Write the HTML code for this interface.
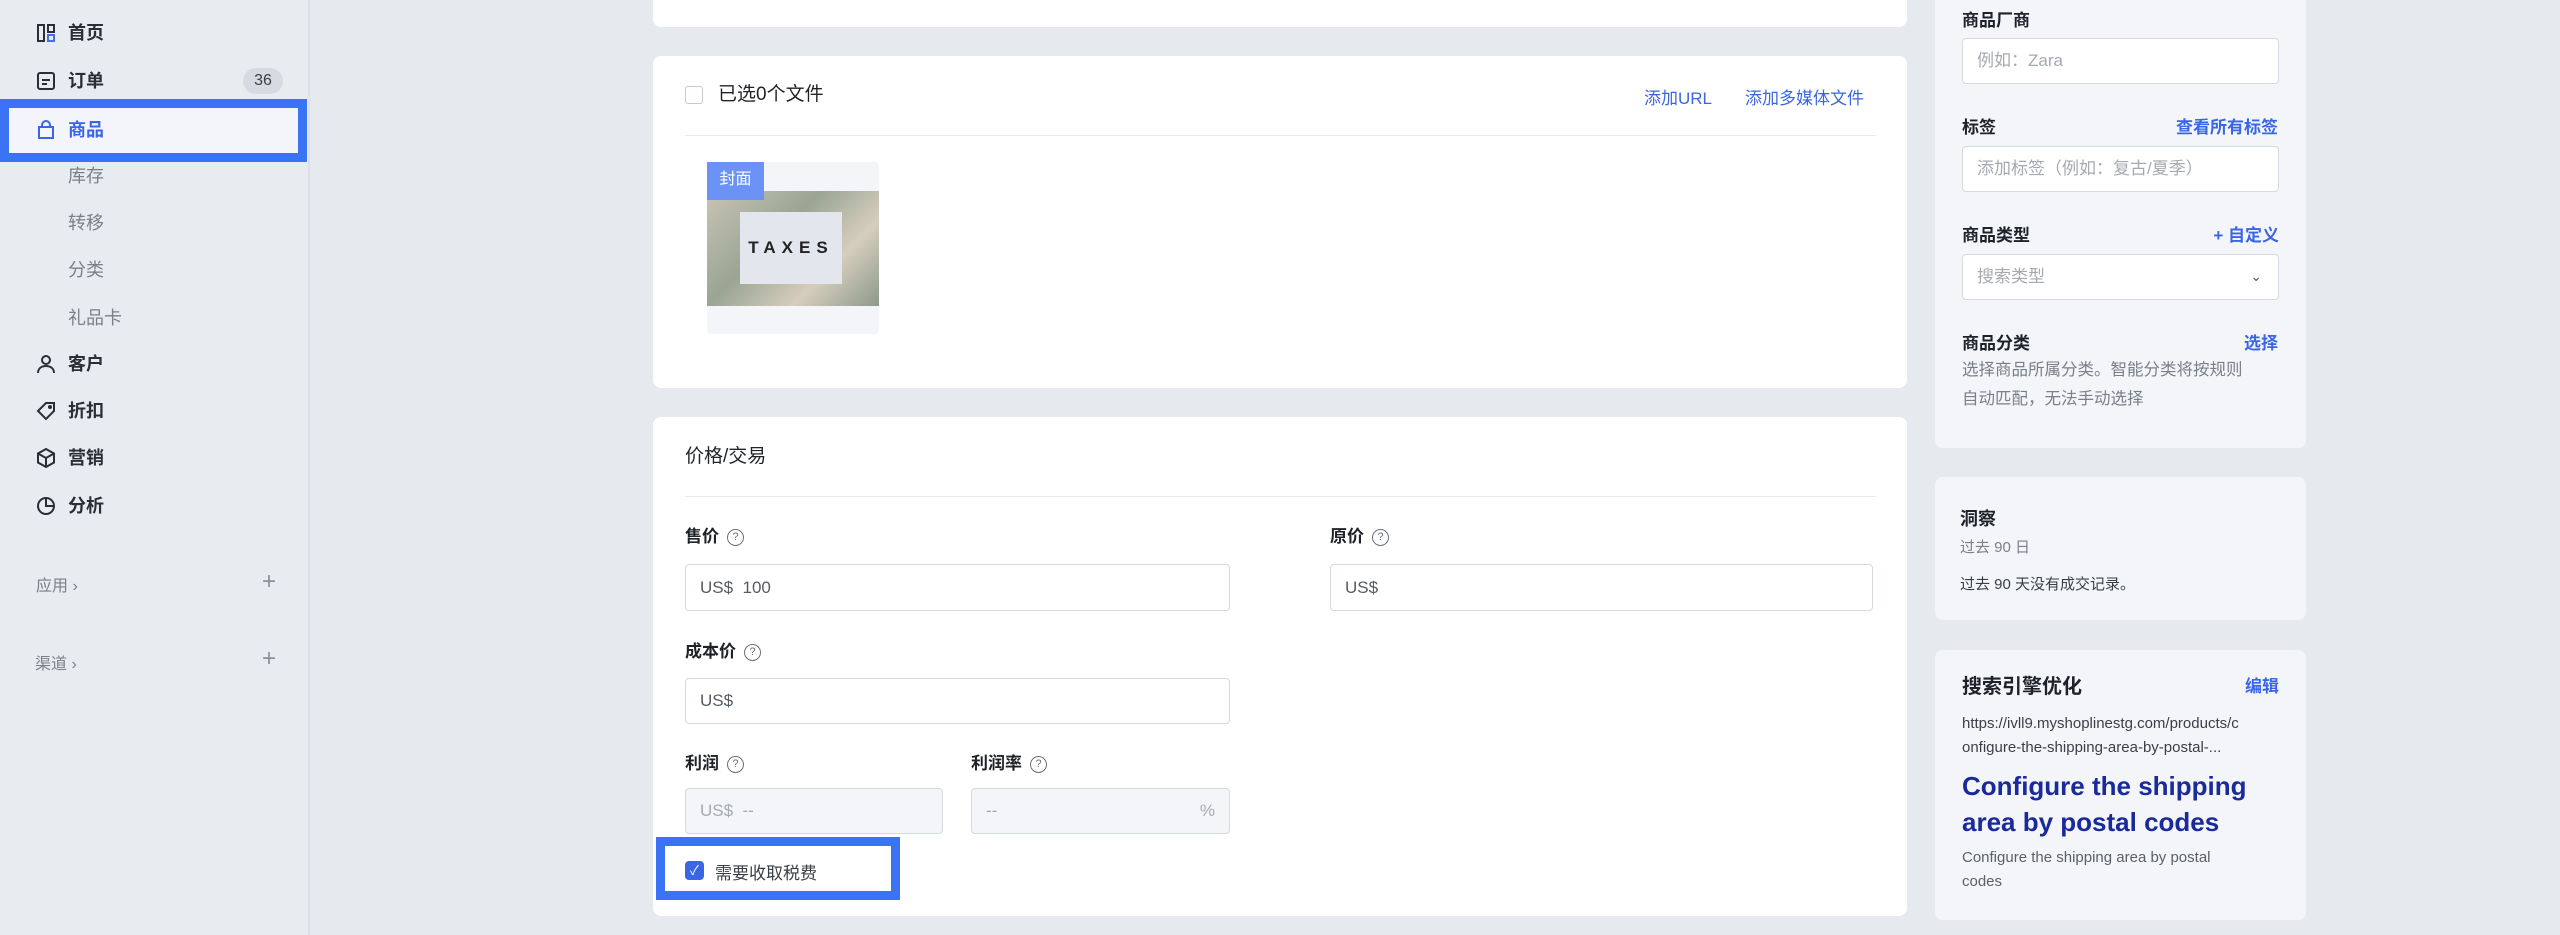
<!DOCTYPE html>
<html><head><meta charset="utf-8"><style>
*{box-sizing:border-box;margin:0;padding:0}
body{width:2560px;height:935px;overflow:hidden;background:#e6e9ee;font-family:"Liberation Sans","Noto Sans CJK SC",sans-serif;color:#1f2329;position:relative}
.a{position:absolute}
.side{left:0;top:0;width:310px;height:935px;background:#e8ebf0;border-right:2px solid #dde0e6}
.nav{left:68px;font-size:18px;font-weight:bold;color:#2a2f36;line-height:24px}
.sub{left:68px;font-size:18px;color:#7a8089;line-height:24px}
.ic{left:36px;width:20px;height:20px}
.card{background:#fff;border-radius:8px}
.lbl{font-size:17px;font-weight:bold;color:#1f2329;line-height:22px}
.inp{border:1.5px solid #d5d9e0;border-radius:4px;background:#fff;font-size:17px;color:#555b63;padding-left:14px;display:flex;align-items:center}
.q{display:inline-block;width:17px;height:17px;border:1.5px solid #6b7078;border-radius:50%;font-size:11px;line-height:14px;text-align:center;vertical-align:2px;margin-left:8px;font-weight:normal;color:#6b7078}
.rc{background:#f3f5f9;border-radius:8px;left:1935px;width:371px}
.rl{font-size:17px;font-weight:bold;color:#1f2329}
.link{color:#3a66e6;font-weight:bold}
.ri{left:1962px;width:317px;height:46px;border:1.5px solid #d5d9e0;border-radius:4px;background:#fff;font-size:17px;color:#a5aab2;padding-left:14px;line-height:43px}
</style></head><body>
<div class="a side"></div>
<svg class="a ic" style="top:23px" viewBox="0 0 20 20" fill="none" stroke="#2a2f36" stroke-width="2"><rect x="2" y="2" width="6" height="16"/><rect x="12" y="2" width="6" height="7"/><rect x="12" y="12" width="6" height="6" stroke="#4a6cf0"/></svg>
<div class="a nav" style="top:21px">首页</div>
<svg class="a ic" style="top:71px" viewBox="0 0 20 20" fill="none" stroke="#2a2f36" stroke-width="2"><rect x="2" y="2" width="16" height="16" rx="2"/><path d="M6 9h8M6 13h5"/></svg>
<div class="a nav" style="top:69px">订单</div>
<div class="a" style="left:243px;top:68px;width:40px;height:26px;border-radius:13px;background:#d6dae2;font-size:16px;text-align:center;line-height:26px;color:#3a3f46">36</div>
<div class="a" style="left:0;top:99px;width:307px;height:63px;border:9px solid #3b73f5;background:#f4f5fa"></div>
<svg class="a ic" style="top:120px" viewBox="0 0 20 20" fill="none" stroke="#3a66e6" stroke-width="2"><path d="M3 7h14v11H3z"/><path d="M6 7V5a4 4 0 0 1 8 0v2"/></svg>
<div class="a nav" style="top:118px;color:#3a66e6">商品</div>
<div class="a sub" style="top:164px">库存</div>
<div class="a sub" style="top:211px">转移</div>
<div class="a sub" style="top:258px">分类</div>
<div class="a sub" style="top:306px">礼品卡</div>
<svg class="a ic" style="top:354px" viewBox="0 0 20 20" fill="none" stroke="#2a2f36" stroke-width="2"><circle cx="10" cy="6" r="4"/><path d="M2 19c0-5 4-7 8-7s8 2 8 7"/></svg>
<div class="a nav" style="top:352px">客户</div>
<svg class="a ic" style="top:401px" viewBox="0 0 20 20" fill="none" stroke="#2a2f36" stroke-width="2"><path d="M2 10l8-8h8v8l-8 8z"/><circle cx="14" cy="6" r="1"/></svg>
<div class="a nav" style="top:399px">折扣</div>
<svg class="a ic" style="top:448px" viewBox="0 0 20 20" fill="none" stroke="#2a2f36" stroke-width="2"><path d="M10 1l8 4.5v9L10 19l-8-4.5v-9z"/><path d="M2 5.5l8 4.5 8-4.5M10 10v9"/></svg>
<div class="a nav" style="top:446px">营销</div>
<svg class="a ic" style="top:496px" viewBox="0 0 20 20" fill="none" stroke="#2a2f36" stroke-width="2"><circle cx="10" cy="10" r="8"/><path d="M10 2v8h8"/></svg>
<div class="a nav" style="top:494px">分析</div>
<div class="a" style="left:36px;top:572px;font-size:16px;color:#7a8089">应用 ›</div>
<div class="a" style="left:262px;top:568px;font-size:24px;color:#8a9099">+</div>
<div class="a" style="left:35px;top:650px;font-size:16px;color:#7a8089">渠道 ›</div>
<div class="a" style="left:262px;top:645px;font-size:24px;color:#8a9099">+</div>

<div class="a card" style="left:653px;top:-10px;width:1254px;height:37px"></div>
<div class="a card" style="left:653px;top:56px;width:1254px;height:332px"></div>
<div class="a" style="left:685px;top:86px;width:18px;height:18px;border:1.5px solid #c5cad2;border-radius:3px"></div>
<div class="a" style="left:718px;top:83px;font-size:19px;line-height:24px">已选0个文件</div>
<div class="a link" style="left:1644px;top:84px;font-size:17px;font-weight:normal">添加URL</div>
<div class="a link" style="left:1745px;top:84px;font-size:17px;font-weight:normal">添加多媒体文件</div>
<div class="a" style="left:685px;top:135px;width:1191px;height:1px;background:#e8eaee"></div>
<div class="a" style="left:707px;top:162px;width:172px;height:172px;background:#f4f5f8;border-radius:4px"></div>
<div class="a" style="left:707px;top:191px;width:172px;height:115px;background:linear-gradient(135deg,#c9c4b5,#9aa594 40%,#d6cdbe 70%,#8c9a8a)"></div>
<div class="a" style="left:740px;top:212px;width:102px;height:72px;background:#e4e6ee;font-size:17px;font-weight:bold;letter-spacing:6px;text-align:center;line-height:72px;color:#222">TAXES</div>
<div class="a" style="left:707px;top:162px;width:57px;height:38px;background:#6b93f5;color:#fff;font-size:16px;text-align:center;line-height:36px">封面</div>

<div class="a card" style="left:653px;top:417px;width:1254px;height:499px"></div>
<div class="a" style="left:685px;top:445px;font-size:19px;line-height:24px">价格/交易</div>
<div class="a" style="left:685px;top:496px;width:1191px;height:1px;background:#e8eaee"></div>
<div class="a lbl" style="left:685px;top:526px">售价<span class="q">?</span></div>
<div class="a lbl" style="left:1330px;top:526px">原价<span class="q">?</span></div>
<div class="a inp" style="left:685px;top:564px;width:545px;height:47px">US$&nbsp;&nbsp;100</div>
<div class="a inp" style="left:1330px;top:564px;width:543px;height:47px">US$</div>
<div class="a lbl" style="left:685px;top:641px">成本价<span class="q">?</span></div>
<div class="a inp" style="left:685px;top:678px;width:545px;height:46px">US$</div>
<div class="a lbl" style="left:685px;top:753px">利润<span class="q">?</span></div>
<div class="a lbl" style="left:971px;top:753px">利润率<span class="q">?</span></div>
<div class="a inp" style="left:685px;top:788px;width:258px;height:46px;background:#f4f5f8;color:#a5aab2">US$&nbsp;&nbsp;--</div>
<div class="a inp" style="left:971px;top:788px;width:259px;height:46px;background:#f4f5f8;color:#a5aab2;justify-content:space-between;padding-right:14px"><span>--</span><span>%</span></div>
<div class="a" style="left:656px;top:837px;width:244px;height:63px;border:9px solid #3b73f5;background:#fff"></div>
<div class="a" style="left:685px;top:861px;width:19px;height:19px;background:#3a66e6;border-radius:4px;color:#fff;font-size:13px;text-align:center;line-height:19px">✓</div>
<div class="a" style="left:715px;top:859px;font-size:17px;color:#3a3f46">需要收取税费</div>

<div class="a rc" style="top:-10px;height:458px"></div>
<div class="a rl" style="left:1962px;top:6px">商品厂商</div>
<div class="a ri" style="top:38px">例如：Zara</div>
<div class="a rl" style="left:1962px;top:113px">标签</div>
<div class="a link" style="right:282px;top:113px;font-size:17px">查看所有标签</div>
<div class="a ri" style="top:146px">添加标签（例如：复古/夏季）</div>
<div class="a rl" style="left:1962px;top:221px">商品类型</div>
<div class="a link" style="right:281px;top:221px;font-size:17px">+ 自定义</div>
<div class="a ri" style="top:254px">搜索类型<span style="position:absolute;right:16px;top:0;color:#555;font-size:14px">⌄</span></div>
<div class="a rl" style="left:1962px;top:329px">商品分类</div>
<div class="a link" style="right:282px;top:329px;font-size:17px">选择</div>
<div class="a" style="left:1962px;top:356px;width:312px;font-size:16.5px;line-height:29px;color:#7a8089">选择商品所属分类。智能分类将按规则<br>自动匹配，无法手动选择</div>

<div class="a rc" style="top:477px;height:143px"></div>
<div class="a rl" style="left:1960px;top:505px;font-size:18px">洞察</div>
<div class="a" style="left:1960px;top:536px;font-size:15px;color:#7a8089">过去 90 日</div>
<div class="a" style="left:1960px;top:573px;font-size:15px;color:#3a3f46">过去 90 天没有成交记录。</div>

<div class="a rc" style="top:650px;height:270px"></div>
<div class="a rl" style="left:1962px;top:670px;font-size:20px">搜索引擎优化</div>
<div class="a link" style="right:281px;top:672px;font-size:17px">编辑</div>
<div class="a" style="left:1962px;top:712px;width:318px;font-size:15px;line-height:24px;color:#3a3f46;word-break:break-all">https://ivll9.myshoplinestg.com/products/c<br>onfigure-the-shipping-area-by-postal-...</div>
<div class="a" style="left:1962px;top:768px;width:330px;font-size:26px;font-weight:bold;line-height:36px;color:#1a2a9c">Configure the shipping area by postal codes</div>
<div class="a" style="left:1962px;top:846px;width:312px;font-size:15px;line-height:24px;color:#5a6068">Configure the shipping area by postal<br>codes</div>
</body></html>
